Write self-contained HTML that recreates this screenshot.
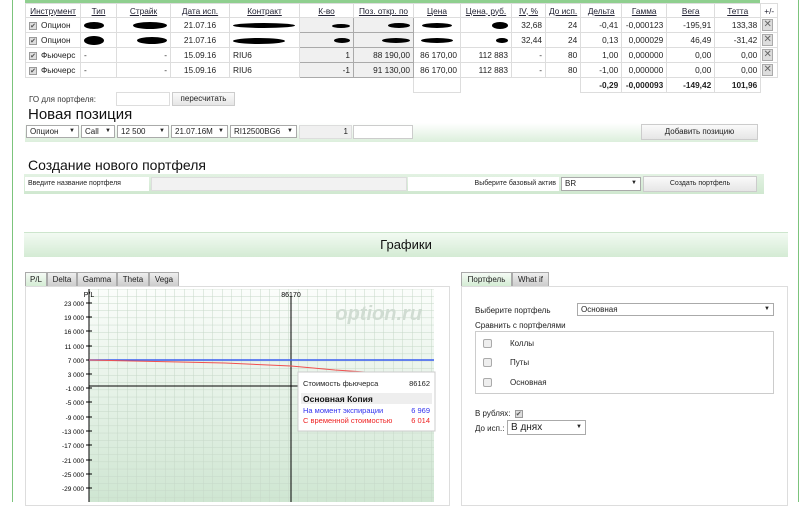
<!DOCTYPE html>
<html><head><meta charset="utf-8"><style>
*{box-sizing:border-box;margin:0;padding:0}
body{width:800px;height:502px;overflow:hidden;background:#fff;font-family:"Liberation Sans",Arial,sans-serif;font-size:8px;color:#222;position:relative}
.a{position:absolute}
.vl{position:absolute;top:0;width:1px;height:502px;background:#7cc47c}
table{border-collapse:collapse;position:absolute;left:25px;top:3px;table-layout:fixed}
td,th{height:15px;font-size:8.3px;border:1px solid #ddd;padding:0 3px;white-space:nowrap;overflow:hidden}
th{font-weight:normal;text-decoration:underline;color:#223;height:14px;text-align:center}
td.r{text-align:right}td.c{text-align:center}
td.g{background:#f0f0f0;border-color:#aaa}
.cb{display:inline-block;width:8px;height:8px;border:1px solid #999;background:#ddd;vertical-align:middle;margin-right:4px;font-size:7px;line-height:7px;text-align:center;color:#555}
.blob{display:inline-block;background:#000;border-radius:50%;height:7px;vertical-align:middle}
.x{display:inline-block;width:11px;height:12px;background:#ddd;border:1px solid #aaa;font-size:10px;line-height:10px;text-align:center;color:#666}
.sel{position:absolute;height:13px;border:1px solid #aaa;background:#fff;font-size:8px;line-height:11px;padding-left:3px}
.sel:after{content:"▼";position:absolute;right:3px;font-size:6px}
.btn{position:absolute;border:1px solid #ccc;background:linear-gradient(#fafafa,#e6e6e6);text-align:center;font-size:8px}
.tab{position:absolute;top:272px;height:15px;border:1px solid #aaa;background:linear-gradient(#eee,#ccc);font-size:8px;line-height:13px;text-align:center}
</style></head><body>
<div class="vl" style="left:12px"></div>
<div class="vl" style="left:798px"></div>
<div class="a" style="left:25px;top:0;width:735px;height:3px;background:#8fcf8f"></div>
<table>
<colgroup><col style="width:55px"><col style="width:36px"><col style="width:54px"><col style="width:59px"><col style="width:70px"><col style="width:54px"><col style="width:60px"><col style="width:47px"><col style="width:51px"><col style="width:34px"><col style="width:34px"><col style="width:41px"><col style="width:45px"><col style="width:48px"><col style="width:46px"><col style="width:15px"></colgroup>
<tr><th>Инструмент</th><th>Тип</th><th>Страйк</th><th>Дата исп.</th><th>Контракт</th><th>К-во</th><th>Поз. откр. по</th><th>Цена</th><th>Цена, руб.</th><th>IV, %</th><th>До исп.</th><th>Дельта</th><th>Гамма</th><th>Вега</th><th>Тетта</th><th style="text-decoration:none">+/-</th></tr>
<tr><td><span class="cb">✔</span>Опцион</td><td><span class="blob" style="width:20px"></span></td><td class="r"><span class="blob" style="width:34px"></span></td><td class="c">21.07.16</td><td><span class="blob" style="width:62px;height:5px"></span></td><td class="r g"><span class="blob" style="width:18px;height:4px"></span></td><td class="r g"><span class="blob" style="width:22px;height:5px"></span></td><td class="c"><span class="blob" style="width:30px;height:5px"></span></td><td class="r"><span class="blob" style="width:16px"></span></td><td class="r">32,68</td><td class="r">24</td><td class="r">-0,41</td><td class="r">-0,000123</td><td class="r">-195,91</td><td class="r">133,38</td><td style="padding:0 1px"><span class="x">✕</span></td></tr>
<tr><td><span class="cb">✔</span>Опцион</td><td><span class="blob" style="width:20px;height:9px"></span></td><td class="r"><span class="blob" style="width:30px"></span></td><td class="c">21.07.16</td><td><span class="blob" style="width:52px;height:6px"></span></td><td class="r g"><span class="blob" style="width:16px;height:5px"></span></td><td class="r g"><span class="blob" style="width:28px;height:5px"></span></td><td class="c"><span class="blob" style="width:32px;height:5px"></span></td><td class="r"><span class="blob" style="width:12px;height:5px"></span></td><td class="r">32,44</td><td class="r">24</td><td class="r">0,13</td><td class="r">0,000029</td><td class="r">46,49</td><td class="r">-31,42</td><td style="padding:0 1px"><span class="x">✕</span></td></tr>
<tr><td><span class="cb">✔</span>Фьючерс</td><td>-</td><td class="r">-</td><td class="c">15.09.16</td><td>RIU6</td><td class="r g">1</td><td class="r g">88 190,00</td><td class="r">86 170,00</td><td class="r">112 883</td><td class="r">-</td><td class="r">80</td><td class="r">1,00</td><td class="r">0,000000</td><td class="r">0,00</td><td class="r">0,00</td><td style="padding:0 1px"><span class="x">✕</span></td></tr>
<tr><td><span class="cb">✔</span>Фьючерс</td><td>-</td><td class="r">-</td><td class="c">15.09.16</td><td>RIU6</td><td class="r g">-1</td><td class="r g">91 130,00</td><td class="r">86 170,00</td><td class="r">112 883</td><td class="r">-</td><td class="r">80</td><td class="r">-1,00</td><td class="r">0,000000</td><td class="r">0,00</td><td class="r">0,00</td><td style="padding:0 1px"><span class="x">✕</span></td></tr>
<tr><td style="border:none"></td><td style="border:none"></td><td style="border:none"></td><td style="border:none"></td><td style="border:none"></td><td style="border:none"></td><td style="border:none"></td><td style="border-top:none"></td><td style="border:none"></td><td style="border:none"></td><td style="border:none"></td><td class="r" style="font-weight:bold">-0,29</td><td class="r" style="font-weight:bold">-0,000093</td><td class="r" style="font-weight:bold">-149,42</td><td class="r" style="font-weight:bold">101,96</td><td style="border:none"></td></tr>
</table>
<div class="a" style="left:29px;top:95px;font-size:8px;color:#333">ГО для портфеля:</div>
<div class="a" style="left:116px;top:92px;width:54px;height:14px;border:1px solid #ddd"></div>
<div class="btn" style="left:172px;top:92px;width:63px;height:14px;line-height:12px">пересчитать</div>
<div class="a" style="left:28px;top:106px;font-size:15px;color:#111">Новая позиция</div>
<div class="a" style="left:25px;top:123px;width:733px;height:19px;background:linear-gradient(#fff,#dcefdc)"></div>
<div class="sel" style="left:26px;top:125px;width:53px">Опцион</div>
<div class="sel" style="left:81px;top:125px;width:34px">Call</div>
<div class="sel" style="left:117px;top:125px;width:52px">12 500</div>
<div class="sel" style="left:171px;top:125px;width:57px">21.07.16M</div>
<div class="sel" style="left:230px;top:125px;width:67px">RI12500BG6</div>
<div class="a" style="left:299px;top:125px;width:53px;height:14px;background:#f0f0f0;border:1px solid #ddd;text-align:right;padding-right:3px;line-height:12px">1</div>
<div class="a" style="left:353px;top:125px;width:60px;height:14px;background:#fff;border:1px solid #ccc"></div>
<div class="btn" style="left:641px;top:124px;width:117px;height:16px;line-height:14px">Добавить позицию</div>

<div class="a" style="left:28px;top:157px;font-size:14px;color:#111">Создание нового портфеля</div>
<div class="a" style="left:24px;top:174px;width:740px;height:20px;background:linear-gradient(#e3f2e3,#d0e8d0)"></div>
<div class="a" style="left:25px;top:177px;width:124px;height:14px;background:#fff;font-size:7px;line-height:14px;padding-left:3px">Введите название портфеля</div>
<div class="a" style="left:151px;top:177px;width:256px;height:14px;background:#f2f2f2;border:1px solid #ddd"></div>
<div class="a" style="left:408px;top:177px;width:151px;height:14px;background:#fff;font-size:7px;line-height:14px;text-align:right;padding-right:3px">Выберите базовый актив</div>
<div class="sel" style="left:561px;top:177px;width:80px;height:14px">BR</div>
<div class="btn" style="left:643px;top:176px;width:114px;height:16px;line-height:14px;font-size:7px">Создать портфель</div>

<div class="a" style="left:24px;top:232px;width:764px;height:25px;background:linear-gradient(#f2faf2,#d4ebd4);border-top:1px solid #cde5cd;text-align:center;font-size:13px;line-height:24px;color:#111">Графики</div>

<div class="tab" style="left:25px;width:22px;background:linear-gradient(#f5fbf5,#d4ecd4)">P/L</div>
<div class="tab" style="left:47px;width:30px">Delta</div>
<div class="tab" style="left:77px;width:40px">Gamma</div>
<div class="tab" style="left:117px;width:32px">Theta</div>
<div class="tab" style="left:149px;width:30px">Vega</div>
<div class="a" style="left:25px;top:286px;width:425px;height:220px;border:1px solid #ddd"></div>
<svg class="a" style="left:25px;top:286px" width="425" height="216">
<defs>
<linearGradient id="bg" x1="0" y1="0" x2="0" y2="1"><stop offset="0" stop-color="#fbfdfb"/><stop offset="1" stop-color="#cfe6d2"/></linearGradient>
<pattern id="gr" x="64" y="10" width="9.5" height="7.2" patternUnits="userSpaceOnUse"><path d="M0 0H9.5M0 0V7.2" stroke="#c6d8c8" stroke-width="1" fill="none"/></pattern>
</defs>
<rect x="64" y="3" width="345" height="213" fill="url(#bg)"/>
<rect x="64" y="3" width="345" height="213" fill="url(#gr)"/>
<text x="397" y="34" font-size="20" font-weight="bold" font-style="italic" fill="#d0dcd2" text-anchor="end" font-family="Liberation Sans">option.ru</text>
<line x1="64" y1="3" x2="64" y2="216" stroke="#000"/>
<line x1="266" y1="10" x2="266" y2="216" stroke="#000"/>
<line x1="64" y1="100" x2="275" y2="100" stroke="#000"/>
<text x="266" y="11" font-size="7" text-anchor="middle" fill="#000">86170</text>
<text x="64" y="11" font-size="7" text-anchor="middle" fill="#000">P/L</text>
<g font-size="6.5" fill="#000" text-anchor="end">
<text x="59" y="20">23 000</text><text x="59" y="34">19 000</text><text x="59" y="48">16 000</text><text x="59" y="63">11 000</text><text x="59" y="77">7 000</text><text x="59" y="91">3 000</text><text x="59" y="105">-1 000</text><text x="59" y="119">-5 000</text><text x="59" y="134">-9 000</text><text x="59" y="148">-13 000</text><text x="59" y="162">-17 000</text><text x="59" y="177">-21 000</text><text x="59" y="191">-25 000</text><text x="59" y="205">-29 000</text>
</g>
<g stroke="#000"><path d="M61 17h6M61 31h6M61 45h6M61 60h6M61 74h6M61 88h6M61 102h6M61 116h6M61 131h6M61 145h6M61 159h6M61 174h6M61 188h6M61 202h6"/></g>
<line x1="64" y1="74" x2="409" y2="74" stroke="#3a5cf0" stroke-width="1.5"/>
<path d="M64 74 L200 77 L266 80 L310 84 L355 87" stroke="#f05050" stroke-width="1" fill="none"/>
<rect x="273" y="86" width="137" height="59" fill="#fff" stroke="#ccc"/>
<text x="278" y="100" font-size="7.5" fill="#222">Стоимость фьючерса</text>
<text x="405" y="100" font-size="7.5" fill="#222" text-anchor="end">86162</text>
<rect x="276" y="107" width="131" height="11" fill="#eee"/>
<text x="278" y="116" font-size="8.5" font-weight="bold" fill="#111">Основная Копия</text>
<text x="278" y="127" font-size="7.5" fill="#3333ee">На момент экспирации</text>
<text x="405" y="127" font-size="7.5" fill="#3333ee" text-anchor="end">6 969</text>
<text x="278" y="137" font-size="7.5" fill="#ee2222">С временной стоимостью</text>
<text x="405" y="137" font-size="7.5" fill="#ee2222" text-anchor="end">6 014</text>
</svg>

<div class="tab" style="left:461px;width:51px;background:linear-gradient(#f5fbf5,#d4ecd4)">Портфель</div>
<div class="tab" style="left:512px;width:37px">What if</div>
<div class="a" style="left:461px;top:286px;width:327px;height:220px;border:1px solid #ddd"></div>
<div class="a" style="left:475px;top:306px;font-size:8px">Выберите портфель</div>
<div class="sel" style="left:577px;top:303px;width:197px;height:13px">Основная</div>
<div class="a" style="left:475px;top:321px;font-size:8px">Сравнить с портфелями</div>
<div class="a" style="left:475px;top:331px;width:299px;height:63px;border:1px solid #ccc"></div>
<div class="a" style="left:483px;top:339px;width:9px;height:9px;border:1px solid #aaa;border-radius:2px;background:#eee"></div>
<div class="a" style="left:510px;top:339px;font-size:8px">Коллы</div>
<div class="a" style="left:483px;top:358px;width:9px;height:9px;border:1px solid #aaa;border-radius:2px;background:#eee"></div>
<div class="a" style="left:510px;top:358px;font-size:8px">Путы</div>
<div class="a" style="left:483px;top:378px;width:9px;height:9px;border:1px solid #aaa;border-radius:2px;background:#eee"></div>
<div class="a" style="left:510px;top:378px;font-size:8px">Основная</div>
<div class="a" style="left:475px;top:409px;font-size:8px">В рублях: <span class="cb" style="margin-left:2px">✔</span></div>
<div class="a" style="left:475px;top:424px;font-size:8px">До исп.:</div>
<div class="sel" style="left:507px;top:420px;width:79px;height:15px;font-size:10px;line-height:13px">В днях</div>
</body></html>
